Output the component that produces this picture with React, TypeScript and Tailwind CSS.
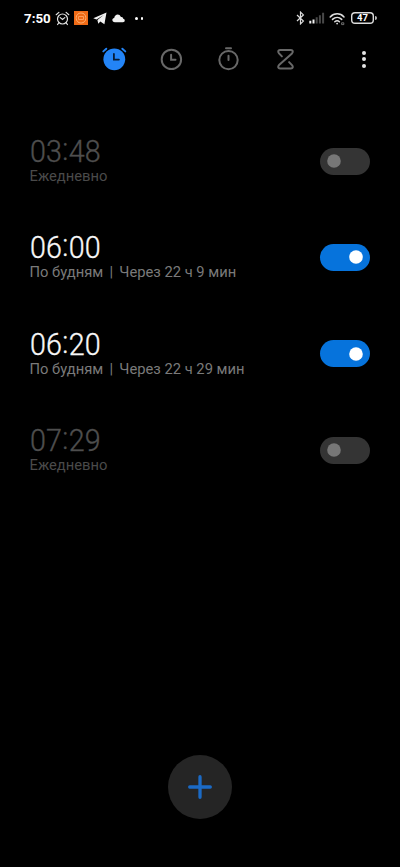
import React from "react";

type Alarm = { time: string; note: string[]; on: boolean };

const alarms: Alarm[] = [
  { time: "03:48", note: ["Ежедневно"], on: false },
  { time: "06:00", note: ["По будням", "Через 22 ч 9 мин"], on: true },
  { time: "06:20", note: ["По будням", "Через 22 ч 29 мин"], on: true },
  { time: "07:29", note: ["Ежедневно"], on: false },
];

function StatusBar() {
  return (
    <div className="flex h-9 items-center pt-px pl-6 pr-[23px] text-white">
      <span className="w-[27px] text-[13.3px] font-bold leading-none whitespace-nowrap">7:50</span>
      <svg className="ml-[4px] h-[15px] w-[15px] shrink-0" viewBox="0 0 15 15" fill="none" stroke="#e2e2e2" strokeWidth="1.2" strokeLinecap="round">
        <circle cx="7.5" cy="8" r="5" />
        <path d="M1.2 3.7 3.9 1.4M13.8 3.7 11.1 1.4M3.8 11.8 2.6 13.5M11.2 11.8l1.2 1.7M5.2 6.6l2.3 1.8 2.3-1.8" />
      </svg>
      <svg className="ml-[4px] h-[14px] w-[14px] shrink-0 -translate-y-px" viewBox="0 0 14 14" fill="none">
        <rect width="14" height="14" fill="#f06b16" />
        <rect x="2.2" y="2" width="9.6" height="10" rx="4.6" stroke="#ffb070" strokeWidth="1" />
        <path d="M4.5 5.5h5v3h-5z" stroke="#ff9f5c" strokeWidth="1" />
      </svg>
      <svg className="ml-[5px] h-[13px] w-[14px] shrink-0" viewBox="0 0 14 13">
        <path d="M.3 6.3 13.5 .6 11.4 12.3 7.3 9.4 5.3 11.8 4.4 8 10.7 3.1 3.5 7.4Z" fill="#f0f0f0" />
      </svg>
      <svg className="ml-[5px] h-[10px] w-[13px] shrink-0 -translate-y-px" viewBox="0 0 13 10">
        <path d="M3 9.2C-.5 9.2-.3 5.2 2.2 5 2.7.9 7.5.1 8.9 4c1.5-.3 2.2.5 2.3 1.7 2.2.3 2 3.5-.3 3.5Z" fill="#f0f0f0" />
      </svg>
      <div className="ml-[10px] flex gap-[3px]">
        <i className="h-[2.5px] w-[2.5px] rounded-full bg-white" />
        <i className="h-[2.5px] w-[2.5px] rounded-full bg-white" />
      </div>
      <svg className="ml-auto h-[14px] w-[9px] shrink-0 -translate-y-px" viewBox="0 0 9 14" fill="none" stroke="#dcdcdc" strokeWidth="1.2">
        <path d="M1 4 7.4 10.1 4.5 12.9V1.1L7.4 3.9 1 10" />
      </svg>
      <svg className="ml-[4px] h-[12px] w-[16px] shrink-0 -translate-y-px" viewBox="0 0 16 12">
        <path d="M.3 8.8h2v2.7h-2zM3.5 7.5h2v4h-2z" fill="#f1f1f1" />
        <path d="M6.7 5.3h2v6.2h-2zM9.9 3.2h2v8.3h-2zM13.1 .7h2v10.8h-2z" fill="#484848" />
      </svg>
      <svg className="ml-[4px] h-[14px] w-[17px] shrink-0" viewBox="0 0 17 14" fill="none" stroke="#dedede" strokeWidth="1.5" strokeLinecap="round">
        <path d="M1.2 4.9C5.2.8 11.2.8 15 4.9M3.5 7.4c2.8-2.7 6.5-2.7 9.2 0M5.8 9.8c1.5-1.4 3.2-1.4 4.6 0" />
        <circle cx="8.1" cy="11.6" r=".9" fill="#dedede" stroke="none" />
        <path d="M13 10.8h1.8v1.8h-1.8z" stroke="#888" strokeWidth=".8" />
      </svg>
      <div className="ml-[5px] flex h-[12px] w-[23px] shrink-0 -translate-y-px items-center justify-center rounded-[4px] bg-black shadow-[inset_0_0_0_1.4px_#dcdcdc]">
        <span className="pt-px text-[9.5px] font-bold leading-none">47</span>
      </div>
      <i className="ml-px h-[4px] w-[2px] shrink-0 -translate-y-px rounded-r bg-[#bbb]" />
    </div>
  );
}

function Toolbar() {
  return (
    <nav className="flex h-[46px] items-center pl-[100px] pr-[22px]">
      <svg className="h-[28px] w-[28px]" viewBox="0 0 28 28" fill="none" strokeLinecap="round">
        <circle cx="14.3" cy="14.3" r="10.9" fill="#2384f6" />
        <path d="M3.3 6.4 6.3 3.7M25.3 6.4 22.3 3.7" stroke="#2384f6" strokeWidth="1.9" />
        <path d="M13.9 9v5.6h5" stroke="#071b34" strokeWidth="1.8" />
      </svg>
      <svg className="ml-[29px] h-[28px] w-[28px]" viewBox="0 0 28 28" fill="none" stroke="#686868" strokeWidth="2" strokeLinecap="round">
        <circle cx="14.4" cy="14.4" r="9.7" />
        <path d="M14.1 9.8v4.9h4.4" />
      </svg>
      <svg className="ml-[29px] h-[28px] w-[28px]" viewBox="0 0 28 28" fill="none" stroke="#686868" strokeWidth="2" strokeLinecap="round">
        <circle cx="14.5" cy="15.1" r="9.2" />
        <path d="M12 3.2h5M14.5 10.8v4.3" />
      </svg>
      <svg className="ml-[29px] h-[28px] w-[28px]" viewBox="0 0 28 28" fill="none" stroke="#686868" strokeWidth="2" strokeLinecap="round" strokeLinejoin="round">
        <path d="M10.9 11.4 8 8.4C6.6 6.8 7.1 5.1 9 5.1h11c1.9 0 2.4 1.7 1 3.3L8 20.1c-1.4 1.6-.9 3.3 1 3.3h11c1.9 0 2.4-1.7 1-3.3l-2.9-3" />
      </svg>
      <div className="ml-auto flex w-[28px] flex-col items-center gap-[2.5px]">
        <i className="h-[4px] w-[4px] rounded-full bg-[#e4e4e4]" />
        <i className="h-[4px] w-[4px] rounded-full bg-[#e4e4e4]" />
        <i className="h-[4px] w-[4px] rounded-full bg-[#e4e4e4]" />
      </div>
    </nav>
  );
}

function AlarmRow({ time, note, on }: Alarm) {
  const [hours, minutes] = time.split(":");
  return (
    <li className="flex h-[96.3px] items-center justify-between pl-[29.5px] pr-[30px]">
      <div>
        <div className={`flex h-[30px] w-fit origin-left translate-y-px scale-x-[0.925] items-center text-[31px] font-light leading-[30px] [-webkit-text-stroke-width:0.35px] ${on ? "text-[#f8f8f8]" : "text-[#4e4e4e]"}`}>
          <span>{hours}</span>
          <span className="flex w-[7.5px] -translate-y-[2px] justify-center">:</span>
          <span>{minutes}</span>
        </div>
        <div className={`flex h-5 text-[14.75px] leading-5 whitespace-nowrap ${on ? "text-[#7a7a7a]" : "text-[#4a4a4a]"}`}>
          <span>{note[0]}</span>
          {note[1] && <span className="w-[16px] text-center">|</span>}
          {note[1] && <span>{note[1]}</span>}
        </div>
      </div>
      <button
        aria-label={time}
        className={`flex h-[27px] w-[50px] items-center rounded-full px-[7px] ${on ? "justify-end bg-[#0673dc]" : "bg-[#343434]"}`}
      >
        <svg className="h-[14px] w-[14px]" viewBox="0 0 14 14">
          <circle cx="7" cy="7" r="6.8" fill={on ? "#ffffff" : "#777777"} />
        </svg>
      </button>
    </li>
  );
}

export default function App() {
  return (
    <main className="flex h-[867px] w-[400px] flex-col overflow-hidden bg-black font-['Roboto',sans-serif]">
      <StatusBar />
      <Toolbar />
      <ul className="mt-[31px]">
        {alarms.map((a) => (
          <AlarmRow key={a.time} {...a} />
        ))}
      </ul>
      <button aria-label="+" className="mx-auto mt-auto mb-[48px] flex h-16 w-16 items-center justify-center rounded-full bg-[#252525]">
        <svg className="h-6 w-6" viewBox="0 0 24 24" stroke="#1b6ac5" strokeWidth="3.3" strokeLinecap="round">
          <path d="M12 1.7v20.6M1.7 12h20.6" />
        </svg>
      </button>
    </main>
  );
}
